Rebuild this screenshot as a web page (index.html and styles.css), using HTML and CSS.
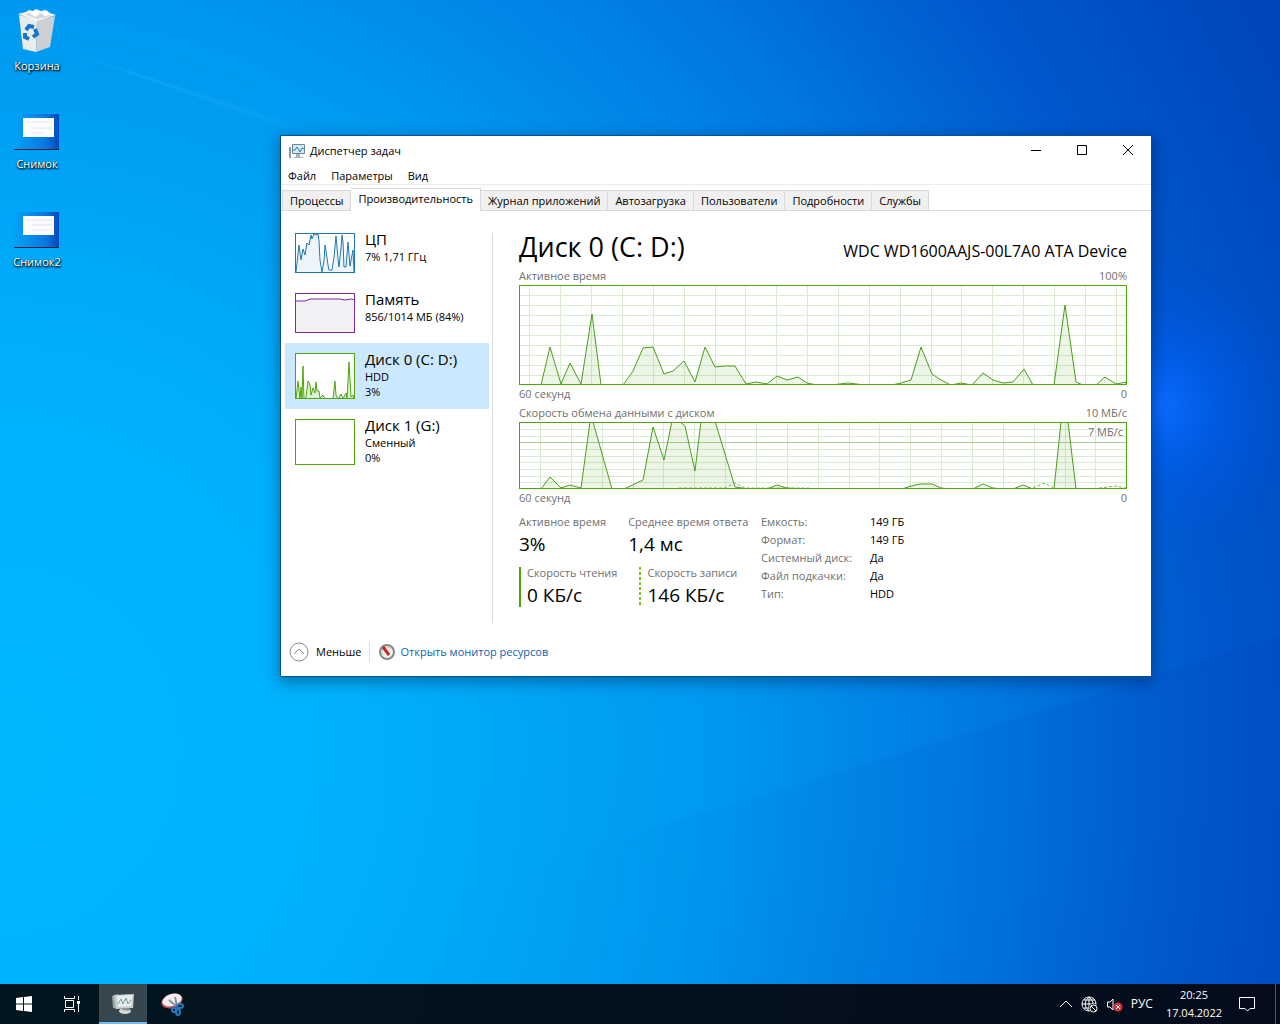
FILE: index.html
```html
<!DOCTYPE html>
<html lang="ru">
<head>
<meta charset="utf-8">
<meta name="viewport" content="width=device-width, initial-scale=1">
<title>Диспетчер задач</title>
<link rel="stylesheet" href="styles.css">
</head>
<body>
<div class="desktop">
  <svg class="wallpaper" viewBox="0 0 1280 984" preserveAspectRatio="none" aria-hidden="true">
    <defs>
      <radialGradient id="sky" gradientUnits="userSpaceOnUse" cx="0" cy="720" r="1440">
        <stop offset="0" stop-color="#00b8ff"/>
        <stop offset=".25" stop-color="#00b0fc"/>
        <stop offset=".5" stop-color="#0098f0"/>
        <stop offset=".7" stop-color="#0076e0"/>
        <stop offset=".85" stop-color="#0056cc"/>
        <stop offset="1" stop-color="#0046bc"/>
      </radialGradient>
      <radialGradient id="glow" gradientUnits="userSpaceOnUse" cx="1160" cy="390" r="150">
        <stop offset="0" stop-color="#0a6cff"/>
        <stop offset=".4" stop-color="#0060f4" stop-opacity=".5"/>
        <stop offset="1" stop-color="#0050d8" stop-opacity="0"/>
      </radialGradient>
      <linearGradient id="beam" x1="0" y1="0" x2="1" y2="0">
        <stop offset="0" stop-color="#003cae" stop-opacity="0"/>
        <stop offset="1" stop-color="#003cae" stop-opacity=".35"/>
      </linearGradient>
      <linearGradient id="ray" x1="0" y1="0" x2="1" y2="0">
        <stop offset="0" stop-color="#30b8ff" stop-opacity="0"/>
        <stop offset=".3" stop-color="#30b8ff" stop-opacity=".25"/>
        <stop offset="1" stop-color="#30b8ff" stop-opacity="0"/>
      </linearGradient>
    </defs>
    <path fill="url(#sky)" d="M0 0h1280v984H0z"/>
    <path fill="url(#glow)" d="M800 0h480v700H800z"/>
    <path fill="url(#beam)" d="M500 840 1080 672 1280 610V984H500z" opacity=".4"/>
    <path fill="url(#ray)" d="M40 40 360 140 340 142z"/>
  </svg>

  <nav class="shortcuts" aria-label="Рабочий стол">
    <a class="shortcut" href="#bin">
      <svg width="48" height="48" viewBox="0 0 48 48" aria-hidden="true">
        <path fill="#e9ebec" d="m6 7 18 5-1 32-13-3z"/>
        <path fill="#cdd0d3" d="m24 12 18-4-5 31-14 5z"/>
        <path fill="#f5f5f5" d="m5 6 8-2 3-2 4 1 3-2 5 2 5-1 4 3 6 2-19 6z"/>
        <path fill="#d3d7da" d="m11 6 8-1 4-2 6 3 7-1 2 3-14 3z"/>
        <path fill="#fff" d="m17 6 5-4 5 3-4 4zM29 5l5-1 3 3-6 1z"/>
        <g fill="none" stroke="#1677c9" stroke-width="4"><path d="m13 22 3-4 5 1M22 21l2 5-4 3M16 31l-4-2v-4"/></g>
      </svg>
      <span>Корзина</span>
    </a>
    <a class="shortcut" href="#shot1">
      <svg width="48" height="48" viewBox="0 0 48 48" aria-hidden="true">
        <defs><linearGradient id="thumb"><stop stop-color="#00a4f8"/><stop offset=".7" stop-color="#0878e0"/><stop offset="1" stop-color="#0448b8"/></linearGradient></defs>
        <path fill="url(#thumb)" d="M1 8h45v36H1z"/><path fill="#06203c" d="M1 43h45v1H1z"/>
        <path fill="#fcfcff" d="M10 12h31v19H10z"/><path stroke="#dde6ec" d="M12 16h5M18 16h21M18 22h21M19 27h11"/>
      </svg>
      <span>Снимок</span>
    </a>
    <a class="shortcut" href="#shot2">
      <svg width="48" height="48" viewBox="0 0 48 48" aria-hidden="true">
        <path fill="url(#thumb)" d="M1 8h45v36H1z"/><path fill="#06203c" d="M1 43h45v1H1z"/>
        <path fill="#fcfcff" d="M10 12h31v19H10z"/><path stroke="#e6dfee" d="M12 16h5M18 16h21M18 21h21M19 26h18"/>
      </svg>
      <span>Снимок2</span>
    </a>
  </nav>

  <main class="window">
    <header class="titlebar">
      <svg width="16" height="16" viewBox="0 0 16 16" aria-hidden="true">
        <path fill="#d6e9f2" stroke="#6b8799" d="M3.500 1.500h12v9h-12z"/><path fill="#a4b4bd" d="M7 11h4v3H7zM5 14h9v1H5z"/>
        <path fill="none" stroke="#1689b5" d="M4 7h2l2-3 3 5 2-4 2 1"/><path fill="#8a9da8" d="M0 4h2v11H0z"/><path fill="#5bb575" d="M0 6h2v2H0z"/>
      </svg>
      <h1 class="title">Диспетчер задач</h1>
      <div class="controls">
        <button type="button" aria-label="Свернуть"><svg width="12" height="12" viewBox="0 0 12 12"><path d="M1 5.500h10"/></svg></button>
        <button type="button" aria-label="Развернуть"><svg width="12" height="12" viewBox="0 0 12 12"><path d="M1.500 .5h9v9h-9z"/></svg></button>
        <button type="button" aria-label="Закрыть"><svg width="12" height="12" viewBox="0 0 12 12"><path d="m1 0 10 10M11 0 1 10"/></svg></button>
      </div>
    </header>
    <nav class="menu">
      <button type="button">Файл</button><button type="button">Параметры</button><button type="button">Вид</button>
    </nav>
    <div class="tabs" role="tablist">
      <button type="button" role="tab">Процессы</button>
      <button type="button" role="tab" class="active" aria-selected="true">Производительность</button>
      <button type="button" role="tab">Журнал приложений</button>
      <button type="button" role="tab">Автозагрузка</button>
      <button type="button" role="tab">Пользователи</button>
      <button type="button" role="tab">Подробности</button>
      <button type="button" role="tab">Службы</button>
    </div>

    <div class="content">
      <aside class="devices">
        <button type="button" class="device">
          <svg class="mini cpu" viewBox="1 1 58 38" preserveAspectRatio="none" aria-hidden="true"><path d="M1 39 2 30 4 12 6 27 8 16 10 22 12 10 14 12 16 2 17 6 19 1 21 2 23 1 24 8 25 27 27 39 29 28 30 12 31 18 33 32 34 37 37 37 39 24 41 3 43 26 44 34 46 15 47 2 48 9 49 34 51 34 53 9 55 33 57 22 58 17 59 39"/></svg>
          <span class="info"><b>ЦП</b><span>7% 1,71 ГГц</span></span>
        </button>
        <button type="button" class="device">
          <svg class="mini ram" viewBox="1 1 58 38" preserveAspectRatio="none" aria-hidden="true"><path d="M0 8h10l5-2h30l5 1 6-1 4 1V40H0z"/></svg>
          <span class="info"><b>Память</b><span>856/1014 МБ (84%)</span></span>
        </button>
        <button type="button" class="device tall selected">
          <svg class="mini disk" viewBox="1 1 58 44" preserveAspectRatio="none" aria-hidden="true"><path d="M1 46 3 28 5 46 6 34 7 46 8 13 9 46 11 44 13 28 15 32 16 42 18 35 20 40 21 29 22 38 24 38 25 45 28 42 30 46H38L40 28 41 42 43 46 46 41 48 46 51 40 52 46 54 9 56 44 58 42 59 46z"/></svg>
          <span class="info"><b>Диск 0 (C: D:)</b><span>HDD</span><span>3%</span></span>
        </button>
        <button type="button" class="device tall">
          <svg class="mini disk" viewBox="1 1 58 44" preserveAspectRatio="none" aria-hidden="true"></svg>
          <span class="info"><b>Диск 1 (G:)</b><span>Сменный</span><span>0%</span></span>
        </button>
      </aside>

      <section class="details">
        <div class="heading"><h2>Диск 0 (C: D:)</h2><span>WDC WD1600AAJS-00L7A0 ATA Device</span></div>
        <div class="caption"><span>Активное время</span><span>100%</span></div>
        <svg class="chart active-time" viewBox="1 1 606 98" preserveAspectRatio="none" role="img" aria-label="Активное время">
          <path class="grid" d="M10 0v100M41 0v100M72 0v100M103 0v100M134 0v100M165 0v100M196 0v100M226 0v100M257 0v100M288 0v100M319 0v100M350 0v100M381 0v100M412 0v100M442 0v100M473 0v100M504 0v100M535 0v100M566 0v100M597 0v100M0 10h608M0 20h608M0 30h608M0 40h608M0 50h608M0 60h608M0 70h608M0 80h608M0 90h608"/>
          <path class="data" d="M0 100H22L31 62 42 99 51 78 62 99 73 29 82 100H104L114 86 124 63 134 62 145 89 154 86 165 76 176 97 186 62 196 82 206 81H216L227 99 237 97 248 99 258 91 268 95 279 92 288 98 298 100H312L329 98 346 100H373L382 98 392 95 402 62 413 89 422 95 432 100 442 98 453 100 464 88 474 95 484 98 494 97 505 84 514 100H535L546 20 557 97 564 100H577L586 92 597 99 607 97V100z"/>
        </svg>
        <div class="caption below"><span>60 секунд</span><span>0</span></div>
        <div class="caption"><span>Скорость обмена данными с диском</span><span>10 МБ/с</span></div>
        <div class="plot">
          <svg class="chart transfer" viewBox="1 1 606 65" preserveAspectRatio="none" role="img" aria-label="Скорость обмена данными с диском">
            <path class="grid" d="M21 0v67M52 0v67M83 0v67M114 0v67M144 0v67M175 0v67M206 0v67M237 0v67M268 0v67M299 0v67M330 0v67M360 0v67M391 0v67M422 0v67M453 0v67M484 0v67M515 0v67M546 0v67M576 0v67M0 7h608M0 14h608M0 27h608M0 34h608M0 40h608M0 47h608M0 54h608M0 60h608"/>
            <path class="scale" d="M0 20h608"/>
            <path class="data" d="M0 67H22L31 55 42 66 51 63 62 66 71 0H74L93 67H105L124 58 134 5 145 38 153-1H160L166 4 176 49 182-1H196L216 65 230 67H248L258 63 268 66 285 67H383L392 64 401 62H413L422 66 432 67H454L464 62 474 66 484 67H494L504 63 514 67H535L542 0H549L557 67H607z"/>
            <path class="write" d="M160 66 186 66 206 66 216 61 226 66H290M514 66 525 61 535 66M580 66 597 64 607 66"/>
          </svg>
          <span class="scale-label">7 МБ/с</span>
        </div>
        <div class="caption below"><span>60 секунд</span><span>0</span></div>

        <div class="stats">
          <div class="figures">
            <div class="pair">
              <div class="figure"><span>Активное время</span><strong>3%</strong></div>
              <div class="figure"><span>Среднее время ответа</span><strong>1,4 мс</strong></div>
            </div>
            <div class="pair">
              <div class="figure read"><span>Скорость чтения</span><strong>0 КБ/с</strong></div>
              <div class="figure written"><span>Скорость записи</span><strong>146 КБ/с</strong></div>
            </div>
          </div>
          <table class="facts">
            <tr><th scope="row">Емкость:</th><td>149 ГБ</td></tr>
            <tr><th scope="row">Формат:</th><td>149 ГБ</td></tr>
            <tr><th scope="row">Системный диск:</th><td>Да</td></tr>
            <tr><th scope="row">Файл подкачки:</th><td>Да</td></tr>
            <tr><th scope="row">Тип:</th><td>HDD</td></tr>
          </table>
        </div>
      </section>
    </div>

    <footer class="footer">
      <button type="button" class="less"><svg width="20" height="20" viewBox="0 0 20 20" aria-hidden="true"><circle cx="10" cy="10" r="9"/><path d="m5 12 5-5 5 5"/></svg>Меньше</button>
      <a class="monitor" href="#monitor"><svg width="16" height="16" viewBox="0 0 16 16" aria-hidden="true"><circle cx="8" cy="8" r="7" fill="#f0f0ec" stroke="#888" stroke-width="2"/><path d="M4 11a5 5 0 0 1 8-6" fill="none" stroke="#b8c8b0"/><path d="m4 3 6 8" stroke="#c4282c" stroke-width="3"/></svg>Открыть монитор ресурсов</a>
    </footer>
  </main>

  <div class="taskbar">
    <button type="button" class="task" aria-label="Пуск"><svg width="16" height="16" viewBox="0 0 16 16"><path fill="#fff" d="M0 2 7 1v6.500H0zM8 1l8-1v7.500H8zM0 8.500h7V15l-7-1zM8 8.500h8V16l-8-1z"/></svg></button>
    <button type="button" class="task" aria-label="Представление задач"><svg width="18" height="16" viewBox="0 0 18 16"><path fill="none" stroke="#fff" d="M2.500 4.500h8v7h-8zM1.500 0v2.500h10V0M1.500 16v-2.500h10V16M15.500 0v4M15.500 8v8"/><path fill="#fff" d="M14 5h3v3h-3z"/></svg></button>
    <button type="button" class="task running" aria-label="Диспетчер задач"><svg width="24" height="24" viewBox="0 0 24 24"><path fill="#9ba5a8" d="m1 5 6-2v15l-5-1z"/><path fill="#c8cfd0" d="m3 4 20-1-1 14-17 1z"/><path fill="#e9eeed" d="m6 5 15-1-1 11-13 1z"/><path fill="none" stroke="#769a9a" d="m7 13 3-5 2 5 3-6 2 6 3-4"/><ellipse cx="14" cy="20" rx="6" ry="3" fill="#dadcda"/><path fill="#8d9494" d="m11 17 6 0 2 3-8-1z"/></svg></button>
    <button type="button" class="task" aria-label="Ножницы"><svg width="24" height="24" viewBox="0 0 24 24"><ellipse cx="12" cy="9" rx="11" ry="7" fill="#b7484e" transform="rotate(-18 12 9)"/><ellipse cx="12" cy="8" rx="10" ry="6" fill="#f1eeee" transform="rotate(-18 12 8)"/><path fill="none" stroke="#8b9297" stroke-width="2" d="m9 8 7 6M15 5l2 9"/><g fill="none" stroke="#277bc2" stroke-width="2"><ellipse cx="20" cy="14" rx="3" ry="2"/><ellipse cx="18" cy="20" rx="2" ry="3"/><ellipse cx="14" cy="18" rx="2" ry="2"/></g></svg></button>
    <div class="tray">
      <button type="button" aria-label="Скрытые значки"><svg width="14" height="8" viewBox="0 0 14 8"><path d="m1 7 6-6 6 6"/></svg></button>
      <button type="button" aria-label="Нет сети"><svg width="17" height="17" viewBox="0 0 17 17"><circle cx="8" cy="8" r="7"/><path d="M1 8h14M3 4h11M3 12h6M8 1v14M8 1C3 5 3 11 8 15M8 1c3 2 4 5 4 7"/><circle cx="12.500" cy="12.500" r="4.500" fill="#050f18" stroke="none"/><circle cx="12.500" cy="12.500" r="3.500"/><path d="m10 10 5 5"/></svg></button>
      <button type="button" aria-label="Звук выключен"><svg width="17" height="15" viewBox="0 0 17 15"><path d="M1.500 5v5H4l3 3V2L4 5z"/><circle cx="12" cy="10" r="4.500" fill="#d3323c" stroke="none"/><path d="m10 8 4 4M14 8l-4 4"/></svg></button>
      <button type="button" class="language">РУС</button>
      <button type="button" class="clock"><span>20:25</span><span>17.04.2022</span></button>
      <button type="button" class="notices" aria-label="Уведомления"><svg width="16" height="16" viewBox="0 0 16 16"><path d="M.5 1.500h15v11H11L8.500 15 6 12.500H.5z"/></svg></button>
    </div>
  </div>
</div>
</body>
</html>
```
FILE: styles.css
```css
* { box-sizing: border-box; }

body {
  margin: 0;
  font: 11px/16px "Open Sans", "Noto Sans", sans-serif;
  color: #000;
}

button {
  margin: 0;
  padding: 0;
  border: 0;
  background: none;
  color: inherit;
  font: inherit;
  white-space: nowrap;
}

a { color: inherit; text-decoration: none; }
svg { display: block; flex: none; }

.desktop {
  position: relative;
  display: flex;
  flex-direction: column;
  justify-content: space-between;
  min-height: 100vh;
  overflow: hidden;
  background: #0098f0;
}

.wallpaper {
  position: absolute;
  inset: 0;
  width: 100%;
  height: 100%;
}

/* Desktop shortcuts */
.shortcuts {
  position: relative;
  display: flex;
  flex-direction: column;
  align-items: flex-start;
  gap: 32px;
  padding-top: 8px;
}

.shortcut {
  display: flex;
  flex-direction: column;
  align-items: center;
  gap: 2px;
  width: 74px;
  color: #fff;
  text-shadow: 1px 1px 2px #000, 0 1px 2px #000;
}

/* Window */
.window {
  position: absolute;
  left: 281px;
  top: 136px;
  width: 870px;
  background: #fff;
  box-shadow: 0 0 0 1px #075291, 0 4px 14px 2px rgba(0, 20, 60, .4);
}

.titlebar {
  display: flex;
  align-items: center;
  gap: 5px;
  height: 30px;
  padding-left: 8px;
}

.title { margin: 0; font-size: 11px; font-weight: 400; }
.controls { display: flex; margin-left: auto; }
.controls button { display: grid; place-items: center; width: 46px; height: 28px; }
.controls svg { fill: none; stroke: #000; }

.menu {
  display: flex;
  gap: 15px;
  height: 19px;
  padding: 2px 7px;
  border-bottom: 1px solid #ececec;
}

.tabs {
  display: flex;
  align-items: flex-end;
  height: 26px;
  padding: 0 1px;
  border-bottom: 1px solid #d9d9d9;
}

.tabs button {
  height: 20px;
  padding: 0 7px;
  border: 1px solid #d9d9d9;
  border-left: 0;
  border-bottom: 0;
  background: #f0f0f0;
}

.tabs button:first-child { border-left: 1px solid #d9d9d9; }

.tabs .active {
  height: 23px;
  margin-bottom: -1px;
  padding-bottom: 3px;
  background: #fff;
}

.content { display: flex; padding-top: 22px; }

/* Device list */
.devices {
  display: flex;
  flex-direction: column;
  width: 212px;
  height: 390px;
  padding: 0 3px 0 4px;
  border-right: 1px solid #dcdcdc;
}

.device {
  display: flex;
  gap: 10px;
  height: 60px;
  padding: 0 10px 10px;
  text-align: left;
}

.device.tall { height: 66px; padding-top: 10px; }
.device.selected { margin-top: -10px; background: #cce8ff; }

.mini { width: 60px; height: 40px; border: 1px solid; background: #fff; }
.tall .mini { height: 46px; }
.mini path { stroke: currentColor; vector-effect: non-scaling-stroke; }
.cpu { color: #1f78ad; }
.cpu path { fill: #edf5fa; }
.ram { color: #8028a0; }
.ram path { fill: #f3f0f5; }
.disk { color: #4da60c; }
.disk path { fill: #dff0d0; }

.info { display: flex; flex-direction: column; line-height: 15px; }
.info b { padding-bottom: 4px; font-size: 15px; font-weight: 400; line-height: 12px; }

/* Selected device */
.details {
  display: flex;
  flex: 1;
  flex-direction: column;
  min-width: 0;
  padding: 0 24px 0 26px;
}

.heading {
  display: flex;
  align-items: baseline;
  justify-content: space-between;
  height: 34px;
}

.heading h2 { margin: 0; font-size: 27px; font-weight: 400; line-height: 28px; }
.heading span { font-size: 16px; }

.caption {
  display: flex;
  justify-content: space-between;
  height: 18px;
  color: #707070;
  line-height: 18px;
}

.caption.below { height: 19px; }

.plot { position: relative; }
.chart { width: 100%; border: 1px solid #4da60c; background: #fff; }
.active-time { height: 100px; }
.transfer { height: 67px; }
.chart path { fill: none; vector-effect: non-scaling-stroke; }
.chart .grid { stroke: #d9ead3; shape-rendering: crispEdges; }
.chart .scale { stroke: #a8cf96; shape-rendering: crispEdges; }
.chart .data { fill: rgba(77, 166, 12, .1); stroke: #4a9c1c; }
.chart .write { stroke: #7cbb48; stroke-dasharray: 3 2; }

.scale-label {
  position: absolute;
  top: 2px;
  right: 4px;
  color: #707070;
}

.stats { display: flex; gap: 12px; padding-top: 5px; }
.figures { display: flex; flex-direction: column; gap: 7px; width: 230px; padding-top: 1px; }
.pair { display: flex; gap: 22px; }
.figure { display: flex; flex-direction: column; white-space: nowrap; color: #707070; }
.figure strong { color: #000; font-size: 19px; font-weight: 400; line-height: 28px; }

.read {
  padding-left: 8px;
  background: linear-gradient(#4da60c, #4da60c) left center / 2px 40px no-repeat;
}

.written {
  padding-left: 8px;
  background: repeating-linear-gradient(#7cc61c 0 3px, #fff 3px 5px) left center / 2px 40px no-repeat;
}

.facts { align-self: flex-start; border-collapse: collapse; line-height: 18px; }
.facts th { width: 109px; padding: 0; color: #707070; font-weight: 400; text-align: left; }
.facts td { padding: 0; }

.footer {
  display: flex;
  align-items: center;
  height: 53px;
  padding: 4px 8px 0;
}

.less {
  display: flex;
  align-items: center;
  gap: 7px;
  padding-right: 8px;
  border-right: 1px solid #dcdcdc;
}

.less svg { fill: none; stroke: #8a8a8a; }
.monitor { display: flex; align-items: center; gap: 5px; padding-left: 9px; color: #0a62b8; }

/* Taskbar */
.taskbar {
  position: relative;
  display: flex;
  height: 40px;
  background: linear-gradient(90deg, #02151f, #040c1c);
  color: #fff;
}

.task { display: grid; place-items: center; width: 48px; }
.task.running { margin: 0 1px 0 3px; background: #37474f; border-bottom: 2px solid #76b9ed; }

.tray {
  display: flex;
  align-items: center;
  gap: 8px;
  margin-left: auto;
  margin-right: 4px;
  border-right: 1px solid #4c5560;
}

.tray svg { fill: none; stroke: #fff; }
.language { font-size: 12px; }
.clock { display: flex; flex-direction: column; align-items: center; gap: 2px; padding-left: 5px; }
.notices { padding: 0 20px 0 9px; }
```
